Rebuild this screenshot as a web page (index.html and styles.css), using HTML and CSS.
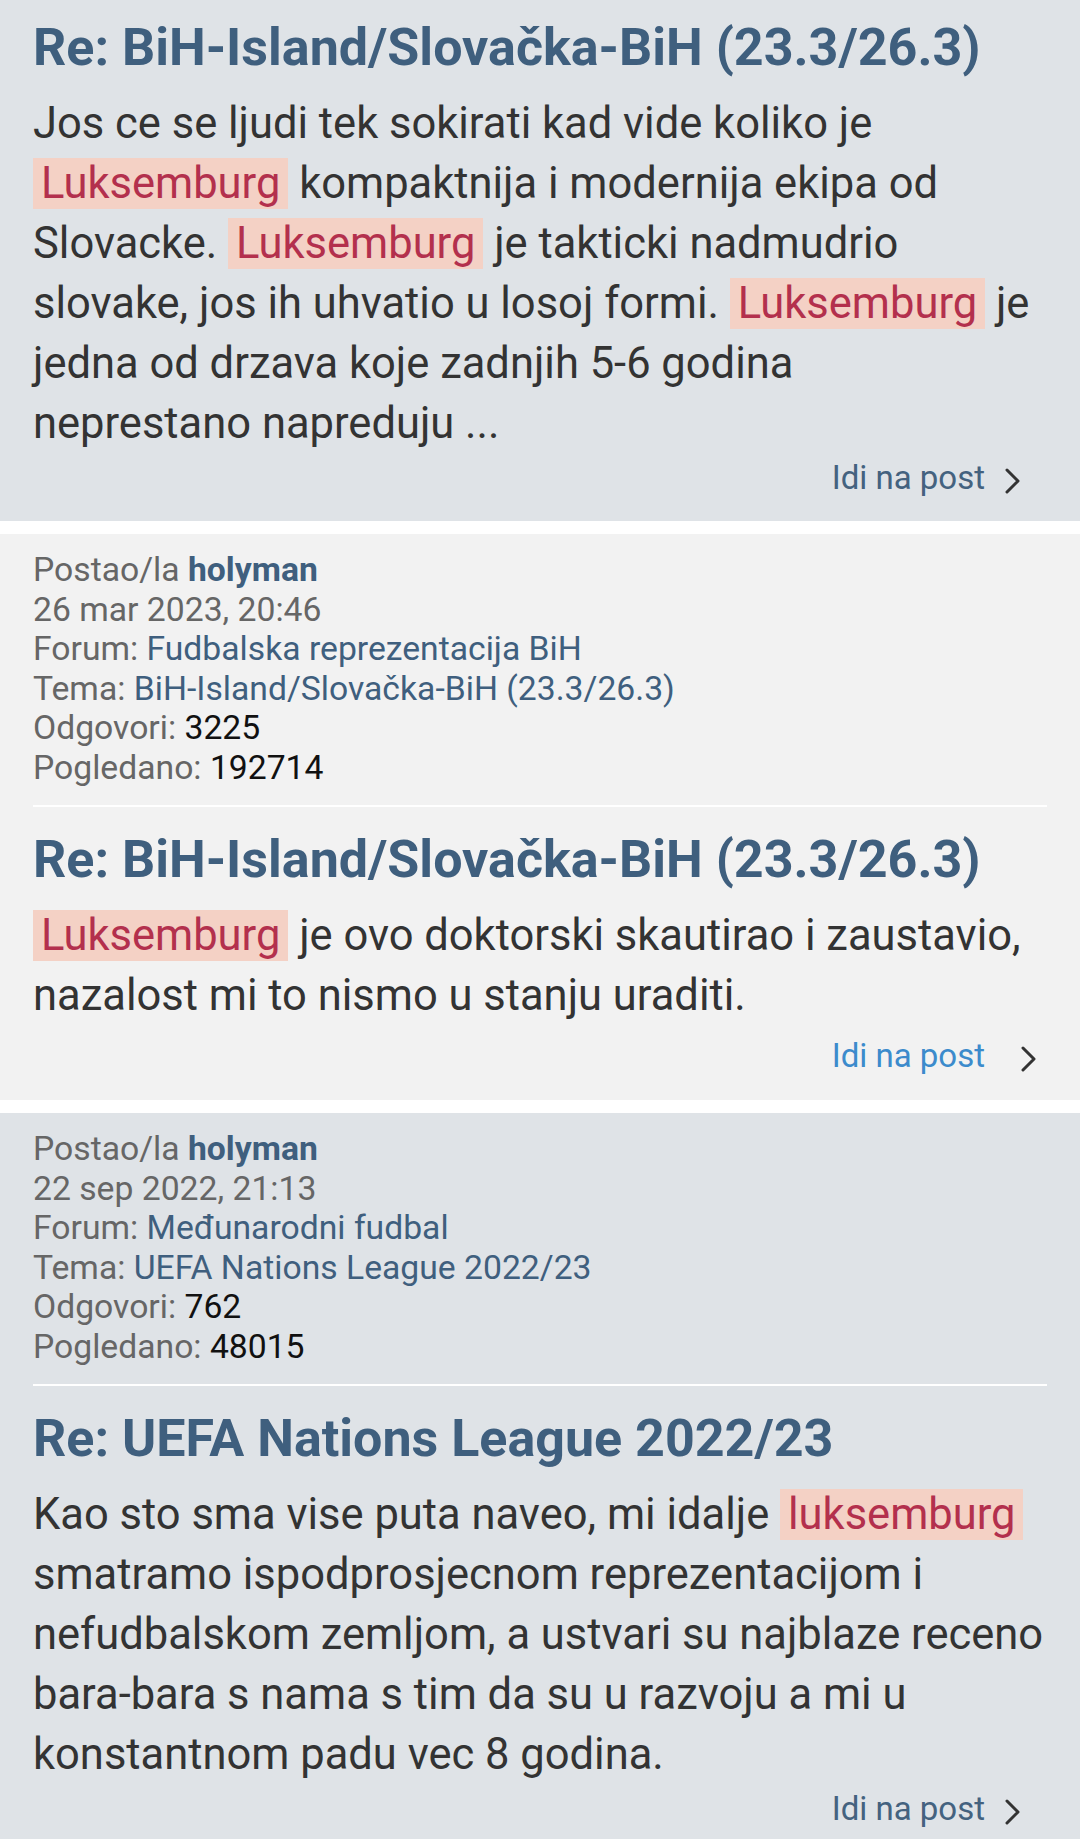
FILE: index.html
```html
<!DOCTYPE html>
<html lang="bs">
<head>
<meta charset="utf-8">
<title>Rezultati pretrage</title>
<link rel="stylesheet" href="styles.css">
</head>
<body>
<div class="results">

  <article class="post post--gray post--first">
    <h2 class="post-title">Re: BiH-Island/Slovačka-BiH (23.3/26.3)</h2>
    <p class="post-body">Jos ce se ljudi tek sokirati kad vide koliko je<br><mark class="hl">Luksemburg</mark> kompaktnija i modernija ekipa od<br>Slovacke. <mark class="hl">Luksemburg</mark> je takticki nadmudrio<br>slovake, jos ih uhvatio u losoj formi. <mark class="hl">Luksemburg</mark> je<br>jedna od drzava koje zadnjih 5-6 godina<br>neprestano napreduju ...</p>
    <div class="post-jump">
      <a class="jump-link" href="#">Idi na post</a>
      <svg class="chev" width="16" height="26" viewBox="0 0 16 26"><polyline points="2,2 13,13 2,24" fill="none" stroke="#333" stroke-width="3" stroke-linecap="round" stroke-linejoin="round"/></svg>
    </div>
  </article>

  <article class="post post--light">
    <div class="post-meta">
      <div>Postao/la <a class="author" href="#">holyman</a></div>
      <div>26 mar 2023, 20:46</div>
      <div>Forum: <a class="meta-link" href="#">Fudbalska reprezentacija BiH</a></div>
      <div>Tema: <a class="meta-link" href="#">BiH-Island/Slovačka-BiH (23.3/26.3)</a></div>
      <div>Odgovori: <span class="meta-val">3225</span></div>
      <div>Pogledano: <span class="meta-val">192714</span></div>
    </div>
    <h2 class="post-title">Re: BiH-Island/Slovačka-BiH (23.3/26.3)</h2>
    <p class="post-body"><mark class="hl">Luksemburg</mark> je ovo doktorski skautirao i zaustavio,<br>nazalost mi to nismo u stanju uraditi.</p>
    <div class="post-jump post-jump--active">
      <a class="jump-link" href="#">Idi na post</a>
      <svg class="chev" width="16" height="26" viewBox="0 0 16 26"><polyline points="2,2 13,13 2,24" fill="none" stroke="#333" stroke-width="3" stroke-linecap="round" stroke-linejoin="round"/></svg>
    </div>
  </article>

  <article class="post post--gray">
    <div class="post-meta">
      <div>Postao/la <a class="author" href="#">holyman</a></div>
      <div>22 sep 2022, 21:13</div>
      <div>Forum: <a class="meta-link" href="#">Međunarodni fudbal</a></div>
      <div>Tema: <a class="meta-link" href="#">UEFA Nations League 2022/23</a></div>
      <div>Odgovori: <span class="meta-val">762</span></div>
      <div>Pogledano: <span class="meta-val">48015</span></div>
    </div>
    <h2 class="post-title">Re: UEFA Nations League 2022/23</h2>
    <p class="post-body">Kao sto sma vise puta naveo, mi idalje <mark class="hl">luksemburg</mark><br>smatramo ispodprosjecnom reprezentacijom i<br>nefudbalskom zemljom, a ustvari su najblaze receno<br>bara-bara s nama s tim da su u razvoju a mi u<br>konstantnom padu vec 8 godina.</p>
    <div class="post-jump">
      <a class="jump-link" href="#">Idi na post</a>
      <svg class="chev" width="16" height="26" viewBox="0 0 16 26"><polyline points="2,2 13,13 2,24" fill="none" stroke="#333" stroke-width="3" stroke-linecap="round" stroke-linejoin="round"/></svg>
    </div>
  </article>

</div>
</body>
</html>
```
FILE: styles.css
```css
html, body {
  margin: 0;
  padding: 0;
  background: #ffffff;
}

body {
  font-family: Roboto, "Noto Sans", sans-serif;
  color: #333333;
}

.results {
  display: flex;
  flex-direction: column;
  gap: 13px;
}

.post {
  padding: 16px 33px 24px;
}

.post--first {
  padding-top: 15px;
  padding-bottom: 23px;
}

.post--gray {
  background: #dfe3e7;
}

.post--light {
  background: #f2f2f2;
}

.post-meta {
  font-size: 33.7px;
  line-height: 39.5px;
  color: #666666;
  padding-bottom: 18px;
  border-bottom: 2px solid #ffffff;
  margin-bottom: 20px;
}

.author {
  color: #3f5f7e;
  font-weight: 700;
  text-decoration: none;
}

.meta-link {
  color: #3f5f7e;
  text-decoration: none;
}

.meta-val {
  color: #111111;
}

.post-title {
  margin: 0 0 13px;
  font-size: 52px;
  line-height: 66px;
  font-weight: 700;
  color: #3f5f7e;
}

.post-body {
  margin: 0;
  font-size: 43.5px;
  line-height: 60px;
  color: #333333;
  white-space: nowrap;
}

.hl {
  background: #f4d1c5;
  color: #b3304d;
  padding: 0 8px;
}

.post-jump {
  display: flex;
  justify-content: flex-end;
  align-items: center;
  gap: 20px;
  margin-top: 4px;
  padding-right: 26px;
  font-size: 33px;
  line-height: 40px;
}

.post-jump--active {
  margin-top: 10px;
  gap: 36px;
  padding-right: 10px;
}

.jump-link {
  color: #44627f;
  text-decoration: none;
}

.post-jump--active .jump-link {
  color: #3c8bcc;
}

.chev {
  display: block;
  margin-top: 6px;
}
```
